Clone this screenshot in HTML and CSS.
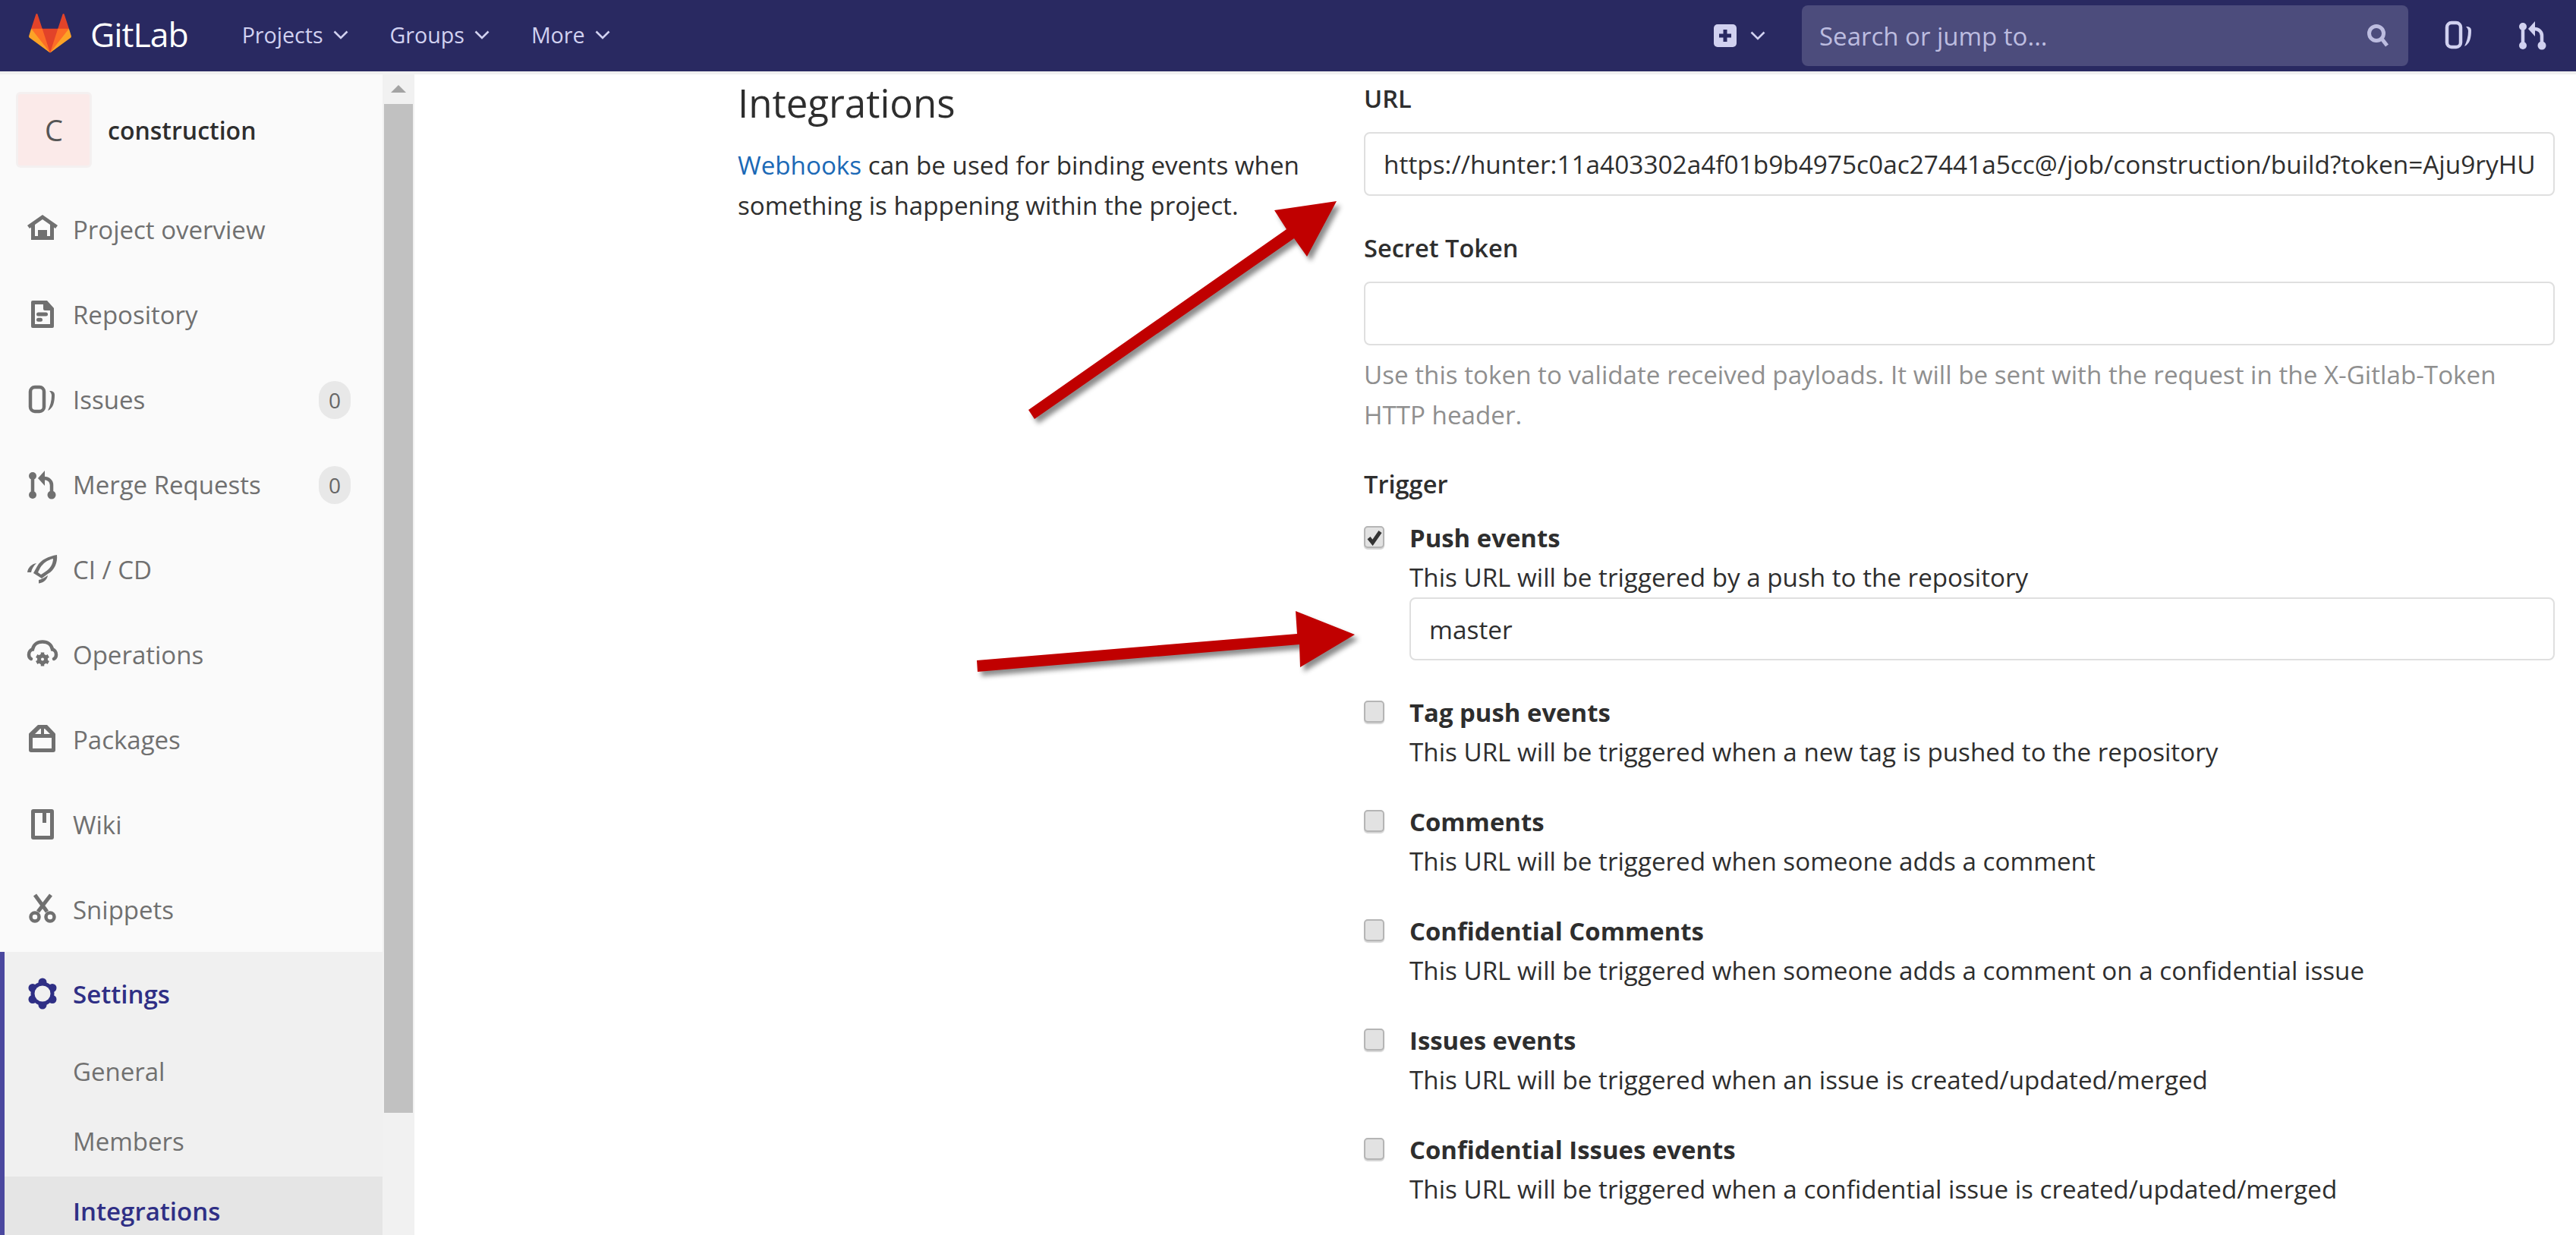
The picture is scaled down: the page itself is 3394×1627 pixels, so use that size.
FILE: index.html
```html
<!DOCTYPE html>
<html lang="en">
<head>
  <meta charset="UTF-8">
  <title>Integrations · construction · GitLab</title>
  <link rel="stylesheet" href="styles.css">
</head>
<body>
  <svg class="sprite">
    <symbol id="i-issues" viewBox="0 0 40 40">
      <rect x="4" y="3" width="18" height="32" rx="6" fill="none" stroke="currentColor" stroke-width="4.5"/>
      <path fill="currentColor" d="M29 8c5 0 7 2 7 5 0 10-2 18-9 21 3-6 5-13 5-20 0-2-1-4-3-6z"/>
    </symbol>
    <symbol id="i-merge" viewBox="0 -2 40 40">
      <path fill="none" stroke="currentColor" stroke-width="4.5" d="M7 6v25M32 31V18c0-5-4-9-10-9h-2"/>
      <circle cx="7" cy="6" r="5" fill="currentColor"/>
      <circle cx="7" cy="31" r="5" fill="currentColor"/>
      <circle cx="32" cy="31" r="5.500" fill="currentColor"/>
      <path fill="currentColor" d="M23-1v20L14 9z"/>
    </symbol>
  </svg>

  <header class="navbar">
    <svg class="logo" viewBox="0 0 36 36">
      <path fill="#e24329" d="M2 14l9.38 9v-9l-4-12.28c-.205-.632-1.176-.632-1.38 0z"/>
      <path fill="#e24329" d="M34 14l-9.38 9v-9l4-12.28c.205-.632 1.176-.632 1.38 0z"/>
      <path fill="#e24329" d="M18 34.38L3 14h30z"/>
      <path fill="#fc6d26" d="M18 34.38L11.38 14H2l4 11z"/>
      <path fill="#fc6d26" d="M18 34.38L24.62 14H34l-4 11z"/>
      <path fill="#fca326" d="M2 14L.1 20.16c-.18.565 0 1.2.5 1.56l17.42 12.66z"/>
      <path fill="#fca326" d="M34 14l1.9 6.16c.18.565 0 1.2-.5 1.56L18 34.38z"/>
    </svg>
    <span class="brand">GitLab</span>
    <nav class="nav-links">
      <a class="nav-link">Projects <svg class="chevron" viewBox="0 0 20 12"><path d="M1.5 1.5L10 10l8.5-8.5"/></svg></a>
      <a class="nav-link">Groups <svg class="chevron" viewBox="0 0 20 12"><path d="M1.5 1.5L10 10l8.5-8.5"/></svg></a>
      <a class="nav-link">More <svg class="chevron" viewBox="0 0 20 12"><path d="M1.5 1.5L10 10l8.5-8.5"/></svg></a>
    </nav>
    <div class="nav-right">
      <svg class="plus-icon" viewBox="0 0 30 30"><rect width="30" height="30" rx="5" fill="#d1d1f0"/><path d="M15 7v16M7 15h16" stroke="#292961" stroke-width="5"/></svg>
      <svg class="chevron plus-chevron" viewBox="0 0 20 12"><path d="M1.5 1.5L10 10l8.5-8.5"/></svg>
      <div class="search">
        <span class="search-text">Search or jump to...</span>
        <svg class="search-icon" viewBox="0 0 30 30"><circle cx="13" cy="12" r="9.5"/><path d="M20 19l7 9"/></svg>
      </div>
      <svg class="top-icon issues-top"><use href="#i-issues"/></svg>
      <svg class="top-icon mr-top"><use href="#i-merge"/></svg>
    </div>
  </header>
  <div class="nav-line"></div>

  <div class="page">
    <aside class="sidebar">
      <div class="project">
        <div class="avatar">C</div>
        <span class="project-name">construction</span>
      </div>
      <ul class="side-list">
        <li class="side-item">
          <svg class="side-icon" viewBox="0 0 40 40"><path fill-rule="evenodd" d="M20 0l20 14-3 4-2-1.500V33H5V16.500L3 18l-3-4zm0 6L10 13v15h4v-8h12v8h4V13z"/><path d="M14 20h12v13h-4v-8h-4v8h-4z"/></svg>
          Project overview
        </li>
        <li class="side-item">
          <svg class="side-icon" viewBox="0 0 40 40"><path fill-rule="evenodd" d="M7 1h19l9 10v24a2 2 0 0 1-2 2H7a2 2 0 0 1-2-2V3a2 2 0 0 1 2-2zm3 5v26h20V14h-7a2 2 0 0 1-2-2V6z"/><rect x="12" y="16.500" width="15" height="5" rx="2.500"/><rect x="12" y="23.800" width="8" height="5" rx="2.500"/></svg>
          Repository
        </li>
        <li class="side-item">
          <svg class="side-icon"><use href="#i-issues"/></svg>
          Issues
          <span class="badge">0</span>
        </li>
        <li class="side-item">
          <svg class="side-icon"><use href="#i-merge"/></svg>
          Merge Requests
          <span class="badge">0</span>
        </li>
        <li class="side-item">
          <svg class="side-icon" viewBox="0 0 40 40"><path fill-rule="evenodd" d="M39 0c1 10-3 20-12 25l-8 6-11-7 5-9C18 6 28 2 39 0zm-5 5c-8 2-13 6-17 12l-3 6 4 3 6-4c6-4 10-10 10-17z"/><path d="M12 11C6 12 1 16 0 23h5c1-5 3-8 7-12zM27 27c-1 6-6 10-12 10.500V33c4-1 8-3 12-6z"/></svg>
          CI / CD
        </li>
        <li class="side-item">
          <svg class="side-icon" viewBox="0 0 40 40"><path fill="none" stroke="currentColor" stroke-width="4.500" stroke-linecap="round" d="M5 26c-2-1-3-3-3-5.500 0-4 2.500-6.500 5-7 1-6 6-10 13-10s12 4 13 10c2.500.5 5 3 5 7 0 2.500-1 4.500-3 5.500"/><circle cx="20" cy="26.500" r="4.500" fill="none" stroke="currentColor" stroke-width="5"/><path fill="none" stroke="currentColor" stroke-width="4.500" d="M20 17.500v3.500M20 32v3.500M12.200 22l3 1.700M24.800 29.300l3 1.700M12.200 31l3-1.700M24.800 23.700l3-1.700"/></svg>
          Operations
        </li>
        <li class="side-item">
          <svg class="side-icon" viewBox="0 0 40 40"><path fill-rule="evenodd" d="M14 1h12l10.500 11c.5.500.5 1 .5 2v20a3 3 0 0 1-3 3H5a3 3 0 0 1-3-3V14c0-1 0-1.500.5-2zM7 18v14h25V18zm10-12-7 7h8V6zm5 0v7h8l-7-7z"/></svg>
          Packages
        </li>
        <li class="side-item">
          <svg class="side-icon" viewBox="0 0 40 40"><path fill-rule="evenodd" d="M8 0h24a3 3 0 0 1 3 3v34a3 3 0 0 1-3 3H8a3 3 0 0 1-3-3V3a3 3 0 0 1 3-3zm2 5v30h20V5h-5v13h-5V5z"/></svg>
          Wiki
        </li>
        <li class="side-item">
          <svg class="side-icon" viewBox="0 0 40 40"><path fill="none" stroke="currentColor" stroke-width="5" d="M10 1l16 22M31 1L14 23"/><circle cx="10" cy="30" r="5.500" fill="none" stroke="currentColor" stroke-width="4.500"/><circle cx="30" cy="30" r="5.500" fill="none" stroke="currentColor" stroke-width="4.500"/></svg>
          Snippets
        </li>
        <li class="side-item settings">
          <svg class="side-icon" viewBox="0 0 40 40">
            <circle cx="20" cy="19" r="15.500"/>
            <circle cx="20" cy="4" r="5.500"/><circle cx="20" cy="34" r="5.500"/>
            <circle cx="7" cy="11.500" r="5.500"/><circle cx="33" cy="11.500" r="5.500"/>
            <circle cx="7" cy="26.500" r="5.500"/><circle cx="33" cy="26.500" r="5.500"/>
            <circle class="gear-hole" cx="20" cy="19" r="10.500"/>
          </svg>
          Settings
        </li>
        <li class="sub-item">General</li>
        <li class="sub-item">Members</li>
        <li class="sub-item sub-active">Integrations</li>
      </ul>
    </aside>
    <div class="scrollbar">
      <div class="scroll-btn"><span class="scroll-arrow"></span></div>
      <div class="scroll-thumb"></div>
    </div>

    <main class="content">
      <section class="intro">
        <h2 class="intro-title">Integrations</h2>
        <p class="intro-text"><a class="link">Webhooks</a> can be used for binding events when something is happening within the project.</p>
      </section>
      <form class="form">
        <label class="field-label">URL</label>
        <input class="text-input" type="text" value="https://hunter:11a403302a4f01b9b4975c0ac27441a5cc@/job/construction/build?token=Aju9ryHU">
        <label class="field-label label-gap">Secret Token</label>
        <input class="text-input" type="text">
        <p class="help">Use this token to validate received payloads. It will be sent with the request in the X-Gitlab-Token HTTP header.</p>
        <label class="field-label trigger-label">Trigger</label>

        <div class="check-row first-row">
          <span class="checkbox"><svg class="tick" viewBox="0 0 16 16"><path d="M2 8.500l4 5L14 2" fill="none" stroke="#333" stroke-width="4"/></svg></span>
          <div class="check-body">
            <strong class="check-title">Push events</strong>
            <p class="check-desc">This URL will be triggered by a push to the repository</p>
            <input class="text-input branch-input" type="text" value="master">
          </div>
        </div>
        <div class="check-row tag-row">
          <span class="checkbox"></span>
          <div class="check-body">
            <strong class="check-title">Tag push events</strong>
            <p class="check-desc">This URL will be triggered when a new tag is pushed to the repository</p>
          </div>
        </div>
        <div class="check-row">
          <span class="checkbox"></span>
          <div class="check-body">
            <strong class="check-title">Comments</strong>
            <p class="check-desc">This URL will be triggered when someone adds a comment</p>
          </div>
        </div>
        <div class="check-row">
          <span class="checkbox"></span>
          <div class="check-body">
            <strong class="check-title">Confidential Comments</strong>
            <p class="check-desc">This URL will be triggered when someone adds a comment on a confidential issue</p>
          </div>
        </div>
        <div class="check-row">
          <span class="checkbox"></span>
          <div class="check-body">
            <strong class="check-title">Issues events</strong>
            <p class="check-desc">This URL will be triggered when an issue is created/updated/merged</p>
          </div>
        </div>
        <div class="check-row">
          <span class="checkbox"></span>
          <div class="check-body">
            <strong class="check-title">Confidential Issues events</strong>
            <p class="check-desc">This URL will be triggered when a confidential issue is created/updated/merged</p>
          </div>
        </div>
      </form>
    </main>
  </div>

  <!-- red arrows drawn over the screenshot -->
  <svg class="arrows" width="3394" height="1627" viewBox="0 0 3394 1627">
    <path d="M1355 540L1695 302 1679 277 1761 265 1722 338 1705 314 1363 552z"/>
    <path d="M1287 870L1709 835 1707 805 1785 836 1713 879 1712 849 1288 885z"/>
  </svg>
</body>
</html>
```

FILE: styles.css
```css
html, body {
  margin: 0;
  padding: 0;
  height: 100%;
  overflow: hidden;
  background: #fff;
  font-family: "Open Sans", "Noto Sans", sans-serif;
  color: #2e2e2e;
}

.sprite {
  position: absolute;
  width: 0;
  height: 0;
}

/* top bar */
.navbar {
  display: flex;
  align-items: center;
  height: 94px;
  background: #292961;
  box-sizing: border-box;
  padding-left: 36px;
}

.nav-line {
  height: 4px;
  background: #f0f0f0;
}

.logo {
  width: 60px;
  height: 56px;
  margin-top: -6px;
}

.brand {
  margin-left: 23px;
  font-size: 44.5px;
  color: #fff;
  letter-spacing: -1px;
  margin-top: -6px;
}

.nav-links {
  display: flex;
  margin-left: 71px;
  margin-top: -3px;
  gap: 55px;
}

.nav-link {
  display: flex;
  align-items: center;
  gap: 13px;
  font-size: 28.6px;
  color: #d1d1f0;
}

.chevron {
  width: 20px;
  height: 12px;
  fill: none;
  stroke: #d1d1f0;
  stroke-width: 2.6;
}

.nav-right {
  display: flex;
  align-items: center;
  margin-left: auto;
  padding-right: 37px;
}

.plus-icon {
  width: 30px;
  height: 30px;
}

.plus-chevron {
  margin-left: 18px;
}

.search {
  display: flex;
  align-items: center;
  justify-content: space-between;
  width: 799px;
  height: 80px;
  margin-left: 48px;
  box-sizing: border-box;
  padding: 0 25px 0 23px;
  background: #4c4c7c;
  border-radius: 8px;
}

.search-text {
  font-size: 33px;
  color: #bdbde0;
}

.search-icon {
  width: 30px;
  height: 30px;
  fill: none;
  stroke: #bdbde0;
  stroke-width: 5;
}

.top-icon {
  width: 40px;
  height: 40px;
  color: #d1d1f0;
}

.issues-top {
  margin-left: 47px;
}

.mr-top {
  margin-left: 57px;
}

/* page */
.page {
  display: flex;
  height: 1529px;
  overflow: hidden;
}

.sidebar {
  width: 504px;
  flex-shrink: 0;
  background: #fafafa;
}

.project {
  display: flex;
  align-items: center;
  padding: 22px 0 0 21px;
  height: 102px;
}

.avatar {
  display: flex;
  align-items: center;
  justify-content: center;
  width: 94px;
  height: 94px;
  background: #fbeae9;
  border: 3px solid #f4f0f0;
  border-radius: 6px;
  font-size: 38px;
  color: #555;
}

.project-name {
  margin-left: 21px;
  font-size: 32px;
  font-weight: 600;
}

.side-list {
  list-style: none;
  margin: 25px 0 0;
  padding: 0;
}

.side-item {
  display: flex;
  align-items: center;
  height: 111.9px;
  padding-left: 36px;
  box-sizing: border-box;
  font-size: 33px;
  color: #707070;
}

.side-icon {
  width: 40px;
  height: 40px;
  margin-right: 20px;
  fill: currentColor;
  flex-shrink: 0;
  overflow: visible;
}

.badge {
  display: flex;
  align-items: center;
  justify-content: center;
  width: 42px;
  height: 50px;
  margin-left: auto;
  margin-right: 42px;
  border-radius: 21px;
  background: #e8e8e8;
  font-size: 28px;
  color: #666;
}

.settings,
.sub-item {
  background: #f0f0f0;
  border-left: 6px solid #4b489f;
}

.settings {
  padding-left: 30px;
  color: #2f2f85;
  font-weight: 600;
}

.gear-hole {
  fill: #f0f0f0;
}

.sub-item {
  display: flex;
  align-items: center;
  height: 92px;
  box-sizing: border-box;
  padding-left: 90px;
  font-size: 33px;
  color: #707070;
}

.sub-active {
  background: #e5e5e5;
  color: #2f2f85;
  font-weight: 600;
}

.scrollbar {
  width: 42px;
  flex-shrink: 0;
  background: #f1f1f1;
  box-sizing: border-box;
  padding: 0 2px;
}

.scroll-btn {
  display: flex;
  justify-content: center;
  height: 39px;
  padding-top: 14px;
  box-sizing: border-box;
}

.scroll-arrow {
  width: 0;
  height: 0;
  border-left: 10px solid transparent;
  border-right: 10px solid transparent;
  border-bottom: 10px solid #a3a3a3;
}

.scroll-thumb {
  height: 1329px;
  background: #c1c1c1;
}

/* main */
.content {
  display: flex;
  padding: 6px 0 0 426px;
}

.intro {
  width: 825px;
  flex-shrink: 0;
}

.intro-title {
  margin: 3px 0 0;
  font-size: 51px;
  font-weight: 400;
  line-height: 56px;
}

.intro-text {
  margin: 28px 0 0;
  width: 790px;
  font-size: 33.2px;
  line-height: 53px;
}

.link {
  color: #1b69b6;
}

.form {
  width: 1569px;
}

.field-label {
  display: block;
  font-size: 32.6px;
  font-weight: 600;
  line-height: 52px;
}

.text-input {
  display: block;
  width: 100%;
  height: 84px;
  margin-top: 18px;
  box-sizing: border-box;
  padding: 0 24px;
  border: 2.5px solid #dfdfdf;
  border-radius: 8px;
  background: #fff;
  font-family: inherit;
  font-size: 33.4px;
  color: #2e2e2e;
  outline: none;
}

.label-gap {
  margin-top: 43px;
}

.help {
  margin: 12px 0 0;
  font-size: 33.2px;
  line-height: 53px;
  color: #8f8f8f;
}

.trigger-label {
  margin-top: 39px;
}

.check-row {
  display: flex;
  margin-top: 40px;
}

.first-row {
  margin-top: 19px;
}

.tag-row {
  margin-top: 43px;
}

.checkbox {
  display: flex;
  align-items: center;
  justify-content: center;
  width: 27px;
  height: 29px;
  margin-top: 10px;
  margin-right: 33px;
  box-sizing: border-box;
  flex-shrink: 0;
  border: 2px solid #b5b5b5;
  border-radius: 5px;
  background: #e2e2e2;
  box-shadow: 0 2px 1px #d5d5d5;
}

.tick {
  width: 20px;
  height: 22px;
}

.check-body {
  flex: 1;
}

.check-title {
  display: block;
  font-size: 32.9px;
  font-weight: 700;
  line-height: 52px;
}

.check-desc {
  margin: 0;
  font-size: 33.2px;
  line-height: 52px;
}

.branch-input {
  margin-top: 0;
  height: 83px;
}

.arrows {
  position: absolute;
  top: 0;
  left: 0;
  fill: #c00000;
  filter: drop-shadow(5px 6px 3px rgba(0, 0, 0, 0.45));
  pointer-events: none;
}
```
